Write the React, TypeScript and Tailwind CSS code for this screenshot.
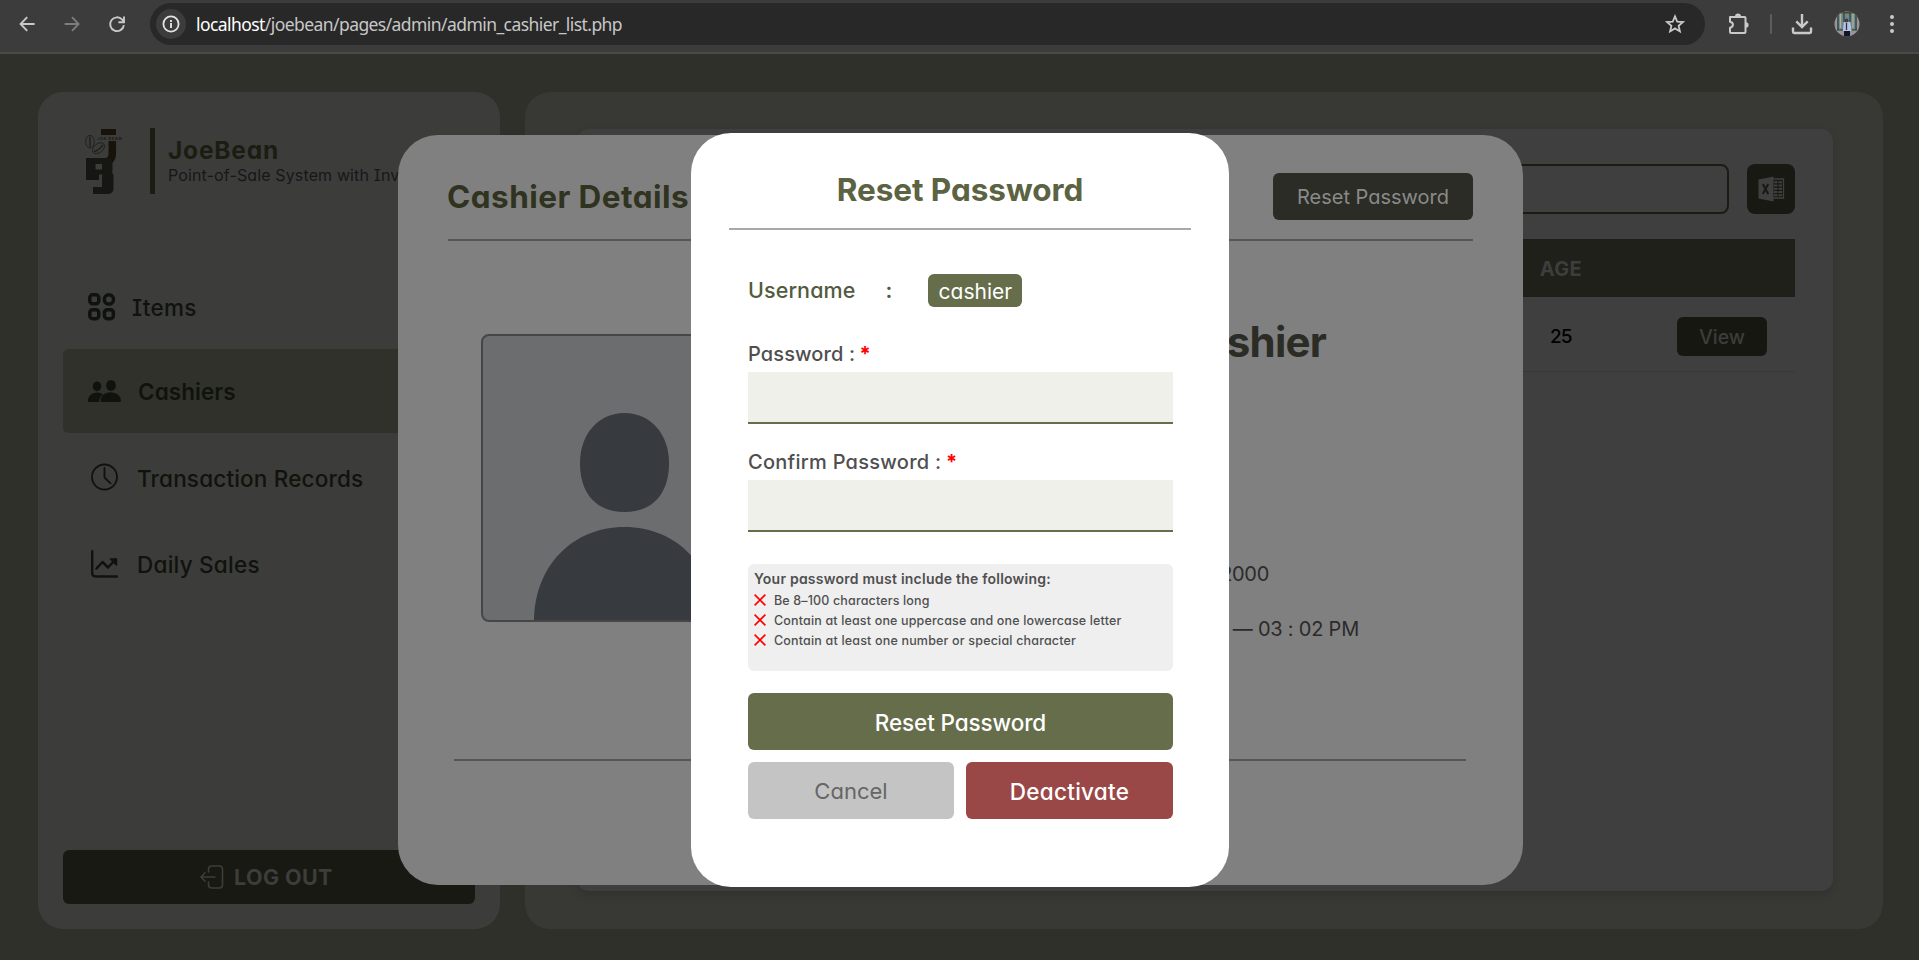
import React from "react";

const nav = "flex items-center text-[22.5px] font-medium text-[#10130d]";

function ToolbarIcon({ children, className = "" }: { children: React.ReactNode; className?: string }) {
  return (
    <svg
      width="20"
      height="20"
      viewBox="0 0 20 20"
      fill="none"
      stroke="currentColor"
      strokeWidth="1.9"
      className={"shrink-0 " + className}
    >
      {children}
    </svg>
  );
}

function BrowserBar() {
  return (
    <header className="flex h-[54px] items-start border-b-2 border-[#4a4a4a] bg-[#3c3c3c] text-[#c9c9c9]">
      <div className="flex h-[47px] w-full items-center pl-[17px]">
        <ToolbarIcon className="mr-[25px]">
          <path d="M17.6 10H3.6M10.2 3.2 3.6 10l6.6 6.8" />
        </ToolbarIcon>
        <ToolbarIcon className="mr-[25px] text-[#7c7c7c]">
          <path d="M2.6 10h14M10 3.2l6.6 6.8-6.6 6.8" />
        </ToolbarIcon>
        <ToolbarIcon className="mr-[23px]">
          <path d="M16.9 11.2A6.9 6.9 0 1 1 15.2 5.6l1.6 1.9M17 2.6v5.6h-5.6" />
        </ToolbarIcon>
        <div className="mt-px flex h-[42px] w-[1555px] shrink-0 items-center rounded-full bg-[#282828] pl-[6px] pr-[20px]">
          <div className="flex size-[30px] items-center justify-center rounded-full bg-[#3c3c3c]">
            <ToolbarIcon className="text-[#e3e3e3]">
              <circle cx="10" cy="10" r="7.6" strokeWidth="1.8" />
              <path d="M10 9v5M10 6v1.9" />
            </ToolbarIcon>
          </div>
          <div className="ml-[10px] flex-1 font-['Noto_Sans',sans-serif] text-[17.5px] tracking-[-0.57px] text-[#c7c7c7]">
            <span className="text-white">localhost</span>/joebean/pages/admin/admin_cashier_list.php
          </div>
          <ToolbarIcon className="scale-[1.05]">
            <path
              d="m10 2.6 2.1 5.1 5.5.4-4.2 3.6 1.3 5.4L10 14.2l-4.7 2.9 1.3-5.4-4.2-3.6 5.5-.4z"
              strokeWidth="1.7"
            />
          </ToolbarIcon>
        </div>
        <svg width="24" height="24" viewBox="0 0 24 24" className="ml-[21px] shrink-0" fill="none" stroke="currentColor" strokeWidth="2">
          <path d="M4 5h14.500q1 0 1 1V20q0 1-1 1H5q-1 0-1-1v-4.200c2-.4 2.900-1.600 2.900-3S6 10.200 4 9.800V5z" strokeLinejoin="round" />
          <path d="M9 4.500a3 3 0 0 1 6 0zM20 10.200a2.600 2.800 0 0 1 0 5.600z" fill="currentColor" stroke="none" />
        </svg>
        <div className="ml-[20px] h-5 w-[2px] rounded bg-[#5c5c5c]" />
        <svg width="24" height="24" viewBox="0 0 24 24" className="ml-[18px] shrink-0" fill="none" stroke="currentColor" strokeWidth="2.400">
          <path d="M12 2v12.500M6.300 9.300 12 15l5.700-5.700" />
          <path d="M3 15.500v4.300q0 1.200 1.200 1.200h15.600q1.200 0 1.200-1.200v-4.300" strokeLinejoin="round" />
        </svg>
        <svg width="26" height="26" viewBox="0 0 26 26" className="ml-[20px] shrink-0">
          <clipPath id="avatar">
            <circle cx="13" cy="13" r="12.500" />
          </clipPath>
          <g clipPath="url(#avatar)">
            <rect width="26" height="26" fill="#9b9396" />
            <rect x="3" y="0" width="20" height="19" fill="#6f8792" />
            <path d="M4 2v17M10 1v16M16 1v17M22 2v17M3 19h20" stroke="#263e31" strokeWidth="1.200" />
            <path d="M6.500 2v15M19 2v15" stroke="#b2b18e" strokeWidth="1.300" />
            <path d="M5 1.500h16" stroke="#4b4a20" strokeWidth="2" />
            <path d="M9.500 11h7l1 9H9z" fill="#bac3dc" />
            <circle cx="12.500" cy="9.500" r="2" fill="#513b38" />
            <path d="M12.500 12v7" stroke="#223061" strokeWidth="1.300" />
            <rect x="10" y="20" width="6" height="6" fill="#0d1830" />
          </g>
        </svg>
        <svg width="8" height="24" viewBox="0 0 8 24" className="ml-[28px] shrink-0" fill="currentColor">
          <circle cx="4" cy="5" r="2" />
          <circle cx="4" cy="12" r="2" />
          <circle cx="4" cy="19" r="2" />
        </svg>
      </div>
    </header>
  );
}

function Logo() {
  return (
    <svg width="40" height="68" viewBox="84 130 40 68" className="shrink-0">
      <rect x="101" y="131" width="15" height="6" fill="#17120a" />
      <path d="M112.300 143v13q0 6-6 8" fill="none" stroke="#17120a" strokeWidth="7.500" />
      <g fill="none" stroke="#1f1f1c" strokeWidth="0.900">
        <ellipse cx="90" cy="143.700" rx="4.400" ry="6.300" />
        <path d="M90 138.500v10.500" strokeWidth="1.400" />
        <ellipse cx="98.500" cy="150.200" rx="6.800" ry="4.500" transform="rotate(-38 98.500 150.200)" />
        <path d="M94 153.500q5-1 9-6.500" strokeWidth="1.400" />
      </g>
      <text x="97" y="142" fontSize="4" fontWeight="700" letterSpacing="0.700" fill="#1b1b18">
        JOE BEAN
      </text>
      <g fill="#161713">
        <rect x="86" y="160" width="9.500" height="22" />
        <rect x="86" y="160" width="25" height="6" rx="1" />
        <rect x="86" y="174" width="13" height="8" />
        <rect x="94" y="171.500" width="12" height="5" />
        <rect x="102" y="160" width="10.500" height="16" rx="4" />
        <rect x="102" y="173" width="11.500" height="23" rx="5" />
        <rect x="93" y="189" width="16" height="7" />
      </g>
    </svg>
  );
}

function Sidebar() {
  return (
    <aside className="flex h-[837px] w-[462px] shrink-0 flex-col rounded-[25px] bg-[#3c3c3a] px-[25px] pb-[25px] pt-[36px]">
      <div className="flex h-[68px] pl-[21px]">
        <Logo />
        <div className="ml-[26px] h-[66px] w-[5px] bg-[#1b1d13]" />
        <div className="ml-[13px] whitespace-nowrap">
          <div className="mt-[8px] text-[24.5px] font-bold leading-[29px] tracking-[0.8px] text-[#1b1d13]">JoeBean</div>
          <div className="text-[16px] leading-[21px] tracking-[0.13px] text-[#17171a]">
            Point-of-Sale System with Inventory
          </div>
        </div>
      </div>
      <nav className="mt-[69px] flex flex-col">
        <div className={nav + " h-[84px] pl-[25px]"}>
          <svg width="28" height="28" viewBox="0 0 28 28" fill="none" stroke="currentColor" strokeWidth="3.500">
            <rect x="1.800" y="1.800" width="9" height="9" rx="3" />
            <circle cx="20.900" cy="6.400" r="4.600" />
            <rect x="1.800" y="16.700" width="9" height="9" rx="3" />
            <rect x="16.400" y="16.700" width="9" height="9" rx="3" />
          </svg>
          <span className="ml-[16px] pt-[2px] tracking-[0.25px]">Items</span>
        </div>
        <div className={nav + " h-[84px] rounded-[6px] bg-[#30312a] pl-[25px]"}>
          <svg width="34" height="24" viewBox="0 0 34 24" fill="currentColor">
            <ellipse cx="9" cy="7.300" rx="4.200" ry="4.900" />
            <ellipse cx="23" cy="6.400" rx="4.900" ry="5.500" />
            <path d="M0 22c0-5 4-8.500 9-8.500 2.400 0 4.600.7 6.200 2-2.700 1.900-4 4.300-4.200 7.500H1.200Q0 23 0 22z" />
            <path d="M12.500 22c0-5.200 4.600-8.800 10.200-8.800S33 16.800 33 22q0 1-1.200 1H13.700q-1.200 0-1.200-1z" />
          </svg>
          <span className="ml-[16px] pt-px font-semibold tracking-[0.05px]">Cashiers</span>
        </div>
        <div className={nav + " mt-[3px] h-[84px] pl-[28px]"}>
          <svg width="28" height="28" viewBox="0 0 28 28" fill="none" stroke="currentColor" strokeWidth="1.800" className="mb-[2px]">
            <circle cx="13.500" cy="14" r="12.500" />
            <path d="M13.500 5v9.500l6 5.800" strokeLinecap="round" />
          </svg>
          <span className="ml-[18px] pt-px tracking-[0.18px]">Transaction Records</span>
        </div>
        <div className={nav + " mt-[2px] h-[84px] pl-[28px]"}>
          <svg width="28" height="28" viewBox="0 0 28 28" fill="none" stroke="currentColor" strokeWidth="2.300" strokeLinecap="round" strokeLinejoin="round">
            <path d="M1.200 1.200V23q0 3.500 3.500 3.500H26" />
            <path d="m5.500 18.500 6-6.500 5.500 5.500 7.500-8" strokeWidth="2.500" />
            <path d="M19.500 9h6v6z" fill="currentColor" strokeWidth="1.500" />
          </svg>
          <span className="ml-[18px] pt-px tracking-[0.25px]">Daily Sales</span>
        </div>
      </nav>
      <div className="mt-auto flex h-[54px] items-center rounded-[6px] bg-[#181912] pl-[137px] text-[#3d3d3b]">
        <svg width="24" height="24" viewBox="0 0 24 24" fill="none" stroke="currentColor" strokeWidth="1.600" strokeLinecap="round">
          <path d="M8.500 7V4.500Q8.500 1 12 1h7.500Q22.500 1 22.500 4.500v15q0 3.500-3 3.500H12q-3.500 0-3.500-3.500V17" />
          <path d="M15 12H1.500M5 7.800 1 12l4 4.200" />
        </svg>
        <span className="ml-[10px] pt-px text-[21.5px] font-bold tracking-[0.4px]">LOG OUT</span>
      </div>
    </aside>
  );
}

function MainPanel() {
  return (
    <main className="flex-1 rounded-[25px] bg-[#383834] pb-[38px] pl-[52px] pr-[50px] pt-[37px]">
      <section className="h-[762px] rounded-[12px] bg-[#3f3f3f] px-[38px] pt-[35px] shadow-[0_4px_10px_rgba(0,0,0,0.12)]">
        <div className="flex justify-end gap-[18px]">
          <div className="h-[50px] w-[420px] rounded-[8px] border-2 border-[#1b1d13]" />
          <div className="flex h-[50px] w-[48px] items-center justify-center rounded-[8px] bg-[#181912]">
            <svg width="27" height="26" viewBox="0 0 27 26">
              <path d="M.5 3.500 15.500.5v25L.5 22.500z" fill="#3f3f3f" />
              <path d="M15 3h10.500v19H15" fill="none" stroke="#3f3f3f" strokeWidth="1.300" />
              <path d="M16 6.200h3.500M16 9.500h3.500M16 12.800h3.500M16 16.100h3.500M16 19.300h3.500M20.500 6.200h3.500M20.500 9.500h3.500M20.500 12.800h3.500M20.500 16.100h3.500M20.500 19.300h3.500" stroke="#3f3f3f" strokeWidth="2" />
              <path d="m4.800 8 5.400 10M10.200 8 4.800 18" stroke="#181912" strokeWidth="2" />
            </svg>
          </div>
        </div>
        <div className="mt-[25px] flex h-[58px] items-center justify-end bg-[#1f2019] pr-[213px] pt-[2px] text-[20px] font-bold tracking-[0.3px] text-[#3d3d3b]">
          <span>AGE</span>
        </div>
        <div className="flex h-[75px] items-center justify-end border-b border-[#373735] pr-[28px] pt-[4px] text-[19.5px] font-medium">
          <span className="w-[23px] pt-[2px] text-[19px] tracking-[-0.9px] text-black">25</span>
          <div className="ml-[104px] flex h-[39px] w-[90px] items-center justify-center rounded-[6px] bg-[#161711] pt-[3px] text-[#3d3d3b]">
            View
          </div>
        </div>
      </section>
    </main>
  );
}

function CashierDetails() {
  return (
    <div className="h-[750px] w-[1125px] rounded-[40px] bg-[#808080] px-[50px] pt-[38px]">
      <div className="flex h-[68px] items-start justify-between border-b-2 border-[#555655] text-[#30331f]">
        <h2 className="-ml-px pt-[6px] text-[31.5px] font-bold leading-[36px] tracking-[0.45px]">Cashier Details</h2>
        <div className="flex h-[47px] w-[200px] items-center justify-center rounded-[6px] bg-[#2b2c25] pt-px text-[20px] text-[#8a8a8a]">
          Reset Password
        </div>
      </div>
      <div className="flex h-[518px] px-[33px] pt-[93px]">
        <div className="h-[288px] w-[286px] shrink-0 overflow-hidden rounded-[8px] border-2 border-[#464646] bg-[#6c6d6f]">
          <svg width="282" height="284" viewBox="483 336 282 284" fill="#373a3e">
            <path d="M624.500 413c26 0 44.500 21 44.500 50 0 33-18.500 49-44.500 49s-44.500-16-44.500-49c0-29 18.500-50 44.500-50z" />
            <path d="M534 621c0-54 38-94 90.500-94s90.500 40 90.500 94z" />
          </svg>
        </div>
        <div className="flex flex-1 flex-col text-[20px] text-[#2b2b2b]">
          <h3 className="-mt-[17px] pr-[114px] text-right text-[42px] font-bold leading-[50px] tracking-[-0.8px] text-[#2b2c25]">
            Cashier
          </h3>
          <p className="mt-[192px] pr-[171px] text-right leading-[30px] tracking-[-0.3px]">2000</p>
          <p className="mt-[25px] pr-[81px] text-right leading-[30px] tracking-[-0.22px]">— 03 : 02 PM</p>
        </div>
      </div>
      <div className="ml-[6px] mr-[7px] h-[2px] bg-[#555655]" />
    </div>
  );
}

function Field({ label, className }: { label: string; className: string }) {
  return (
    <div>
      <div className={"text-[20px] font-medium leading-[26px] text-[#4f4f4f] " + className}>
        {label} <span className="-ml-px font-bold text-[#ff0000]">*</span>
      </div>
      <input className="mt-[5px] block h-[52px] w-full border-b-2 border-[#656d4a] bg-[#f0f0eb] outline-none" />
    </div>
  );
}

function Rule({ children, className }: { children: React.ReactNode; className: string }) {
  return (
    <li className="flex h-5 items-center">
      <svg width="12" height="12" viewBox="0 0 12 12" stroke="#ff0000" strokeWidth="1.600" className="mb-[2px]">
        <path d="m.6.6 10.800 10.800M11.400.6.6 11.400" />
      </svg>
      <span className={"ml-[8px] whitespace-nowrap text-[12.5px] font-medium " + className}>{children}</span>
    </li>
  );
}

function ResetPassword() {
  return (
    <div className="h-[754px] w-[538px] rounded-[40px] bg-white px-[38px] pt-[38px]">
      <h2 className="h-[59px] border-b-2 border-[#a8a8a8] text-center text-[31.5px] font-bold leading-[38px] tracking-[-0.05px] text-[#5c6342]">
        Reset Password
      </h2>
      <div className="pl-[19px] pr-[18px]">
        <div className="mt-[44px] flex h-[33px] items-center text-[21.5px] font-medium text-[#525b3d]">
          <span className="tracking-[0.1px]">Username</span>
          <span className="ml-[30px] font-semibold">:</span>
          <span className="ml-[36px] flex h-[33px] w-[94px] items-center justify-center rounded-[6px] bg-[#656d4a] pt-[2px] text-[21px] font-normal text-white">
            cashier
          </span>
        </div>
        <div className="mt-[34px] flex flex-col gap-[25px]">
          <Field label="Password :" className="tracking-[0.1px]" />
          <Field label="Confirm Password :" className="tracking-[0.26px]" />
        </div>
        <div className="mt-[32px] h-[107px] rounded-[6px] bg-[#efefef] px-[6px] pt-[5px] text-[#4f4f4f]">
          <div className="whitespace-nowrap text-[14px] font-semibold leading-[20px] tracking-[0.23px]">
            Your password must include the following:
          </div>
          <ul className="mt-[2px]">
            <Rule className="tracking-[0.15px]">Be 8–100 characters long</Rule>
            <Rule className="tracking-[0.16px]">Contain at least one uppercase and one lowercase letter</Rule>
            <Rule className="tracking-[0.18px]">Contain at least one number or special character</Rule>
          </ul>
        </div>
        <div className="mt-[22px] grid grid-cols-[206px_1fr] gap-x-3 gap-y-3 text-[22.5px] leading-[55px] text-white">
          <button className="col-span-2 h-[57px] rounded-[6px] bg-[#656d4a] pt-[2px] font-medium tracking-[-0.12px]">
            Reset Password
          </button>
          <button className="h-[57px] rounded-[6px] bg-[#c4c4c4] pt-[2px] text-[22px] text-[#666666]">Cancel</button>
          <button className="h-[57px] rounded-[6px] bg-[#9a4747] pt-[2px] font-medium tracking-[0.28px]">Deactivate</button>
        </div>
      </div>
    </div>
  );
}

export default function App() {
  return (
    <div className="flex h-[960px] w-[1919px] flex-col overflow-hidden bg-[#30302a] font-['Inter',sans-serif] [font-feature-settings:'cv11','cv08']">
      <BrowserBar />
      <div className="relative flex-1">
        <div className="flex gap-[25px] pl-[38px] pr-[36px] pt-[38px]">
          <Sidebar />
          <MainPanel />
        </div>
        <div className="absolute inset-0 flex items-start justify-center pt-[81px] pl-[2px]">
          <CashierDetails />
        </div>
        <div className="absolute inset-0 flex items-start justify-center pt-[79px] pl-[1px]">
          <ResetPassword />
        </div>
      </div>
    </div>
  );
}
